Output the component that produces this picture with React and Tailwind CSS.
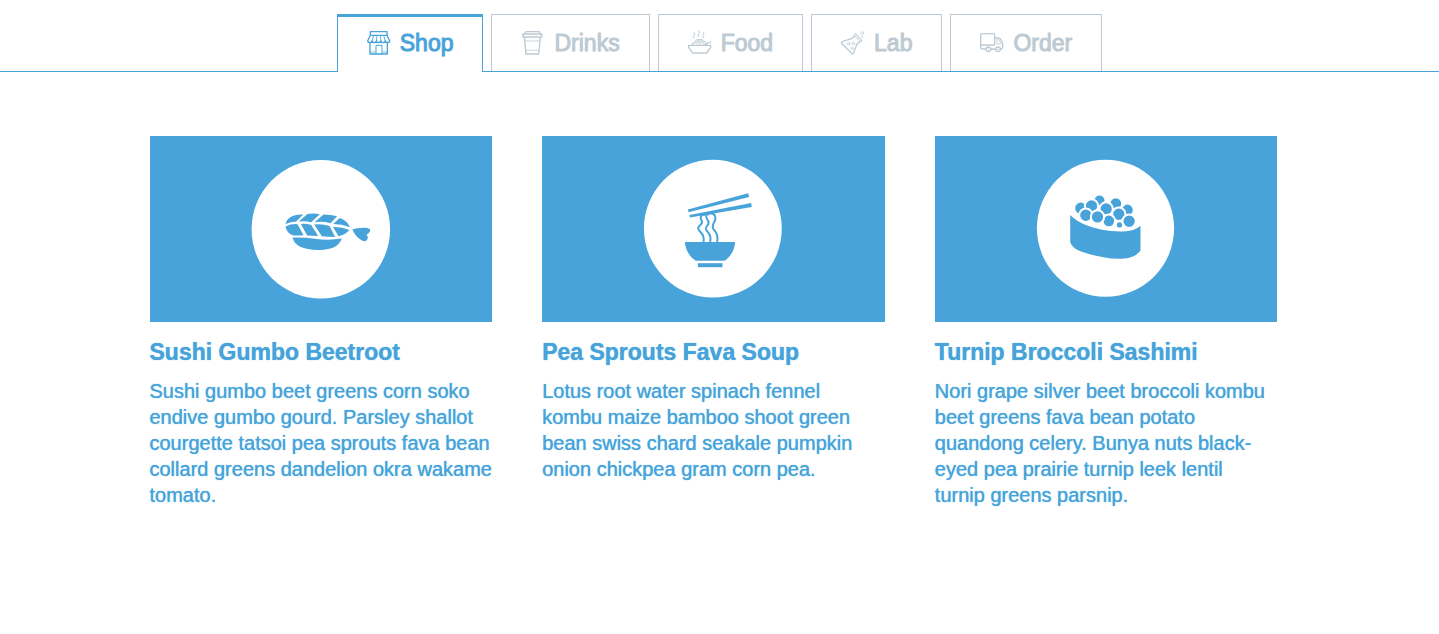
import { useState } from "react";
import clsx from "clsx";

function LineIcon({ children }) {
  return (
    <svg
      viewBox="0 0 72 78"
      className="h-[26px] w-6 shrink-0"
      fill="none"
      stroke="currentColor"
      strokeWidth="4"
      strokeLinecap="round"
      strokeLinejoin="round"
      aria-hidden="true"
    >
      {children}
    </svg>
  );
}

function ShopIcon() {
  return (
    <LineIcon>
      <path d="M10 16V5h50v11" />
      <path d="M10 16h50l8 17a6.7 6 0 0 1-13.2 0a6.7 6 0 0 1-13.2 0a6.7 6 0 0 1-13.2 0a6.7 6 0 0 1-13.2 0a6.7 6 0 0 1-13.2 0z" />
      <path d="M20 17l-5 16M30 17l-2 16M40 17l2 16M50 17l5 16" strokeWidth="2.6" />
      <path d="M9 40v32h52V40" />
      <path d="M27 72V46h18v26" strokeWidth="3" />
      <path d="M10 66h14M48 66h12" strokeWidth="2" />
    </LineIcon>
  );
}

function CupIcon() {
  return (
    <LineIcon>
      <path d="M11 12l4-7h39l4 7" />
      <rect x="5" y="12" width="58" height="9" rx="2" />
      <path d="M10 22l5 50h38l5-50" />
      <path d="M12 33h44M14 61h40" strokeWidth="2.4" />
    </LineIcon>
  );
}

function BowlIcon() {
  return (
    <LineIcon>
      <path d="M2 46h66v6l-12 17H14L2 52z" />
      <path d="M13 44q1-7 7-9 4-7 15-7t15 7q6 2 7 9" strokeWidth="3" />
      <path
        d="M18 43q3-10 16-12M25 43q3-8 14-11M33 43q3-6 12-8M22 36q12-1 17 7M30 32q13 1 18 11M40 31q8 3 9 11"
        strokeWidth="2"
      />
      <path d="M51 43l17-7" />
      <path d="M18 24q-4-4 0-8t1-8M32 20q-4-4 0-8t1-10M46 24q-4-4 0-8t1-8" strokeWidth="3" />
    </LineIcon>
  );
}

function FlaskIcon() {
  return (
    <LineIcon>
      <rect x="36" y="20" width="30" height="6" rx="3" transform="rotate(46 51 23)" strokeWidth="3" />
      <path d="M40 18l-7 7L4 35q-4 2-1 6l29 29q4 3 6-1l10-27 8-7" />
      <circle cx="23" cy="41" r="4" strokeWidth="2.4" />
      <circle cx="37" cy="41" r="4" strokeWidth="2.4" />
      <circle cx="33" cy="55" r="3" strokeWidth="2.4" />
      <circle cx="64" cy="9" r="4" strokeWidth="2.4" />
      <circle cx="63" cy="21" r="1" strokeWidth="2" />
    </LineIcon>
  );
}

function TruckIcon() {
  return (
    <LineIcon>
      <path d="M16 57H8q-6 0-6-6V15q0-4 4-4h34q4 0 4 4v30H3" />
      <path d="M45 24h11q4 0 6 4l6 12v12q0 5-5 5" />
      <path d="M52 29h5l6 13H52z" strokeWidth="2.4" />
      <path d="M34 57h11" />
      <circle cx="25" cy="58" r="7" />
      <circle cx="54" cy="58" r="7" />
      <circle cx="25" cy="58" r="1" strokeWidth="2" />
      <circle cx="54" cy="58" r="1" strokeWidth="2" />
    </LineIcon>
  );
}

function SushiArt() {
  return (
    <svg viewBox="0 0 343 186" className="block w-full bg-[#47a3da]" role="img" aria-label="Shrimp sushi">
      <g transform="translate(95 14) scale(.33333)" fill="#47a3da">
        <circle cx="228" cy="238" r="208" fill="#fff" />
        <path d="M122 222C126 204 146 192 175 194L154 215Q138 216 122 222Z" />
        <path d="M188 192Q208 189 225 193L199 217Q181 212 162 215Z" />
        <path d="M236 194Q258 195 277 199L257 220Q232 213 209 217Z" />
        <path d="M285 204Q307 212 316 232Q291 222 265 222Z" />
        <path d="M122 230Q140 221 158 223L176 256Q158 258 142 256Q125 248 122 230Z" />
        <path d="M168 222Q184 220 199 225L220 258Q202 258 187 257Z" />
        <path d="M208 224Q230 220 254 228L271 261Q249 261 231 259Z" />
        <path d="M265 231Q291 230 314 240Q302 254 281 259Z" />
        <path d="M143 263Q180 262 215 267T291 266C284 288 262 300 224 300C177 301 148 288 143 263Z" />
        <path d="M323 239C338 233 365 231 375 237C379 244 372 251 365 254C372 262 369 272 361 274C347 275 329 255 323 239Z" />
      </g>
    </svg>
  );
}

function SoupArt() {
  return (
    <svg viewBox="0 0 343 186" className="block w-full bg-[#47a3da]" role="img" aria-label="Noodle soup">
      <g transform="translate(96 14) scale(.33333)" fill="#47a3da">
        <circle cx="225" cy="236" r="207" fill="#fff" />
        <path d="M150 179L331 130L334 141L152 187Z" />
        <path d="M155 195L340 159L342 171L156 203Z" />
        <g fill="none" stroke="#47a3da" strokeWidth="6">
          <path d="M202 195C186 191 187 207 191 211C199 223 179 227 181 236C183 248 202 248 197 276" />
          <path d="M216 192C201 191 204 204 210 211C219 223 203 227 204 237C207 249 223 250 217 276" />
          <path d="M217 190C231 190 235 200 232 211C227 222 220 228 227 238C234 248 242 253 238 276" />
        </g>
        <path d="M141 276H292C290 301 278 321 260 333H174C154 319 143 301 141 276Z" />
        <path d="M180 340H254V352H180Z" />
      </g>
    </svg>
  );
}

const roe = [
  [209, 152, 15],
  [258, 161, 16],
  [153, 175, 17],
  [185, 168, 17],
  [293, 180, 16],
  [168, 196, 17],
  [229, 177, 17],
  [267, 193, 17],
  [269, 225, 8],
  [237, 213, 16],
  [203, 201, 17],
  [298, 214, 17],
];

function RollArt() {
  return (
    <svg viewBox="0 0 343 186" className="block w-full bg-[#47a3da]" role="img" aria-label="Roe sushi roll">
      <g transform="translate(95 14) scale(.33333)" fill="#47a3da">
        <circle cx="227" cy="235" r="206" fill="#fff" />
        {roe.map(([cx, cy, r]) => (
          <circle key={`${cx}-${cy}`} cx={cx} cy={cy} r={r + 3} stroke="#fff" strokeWidth="6" />
        ))}
        <path d="M121 194C145 223 203 243 270 245C298 245 319 240 332 226V302C319 320 297 327 267 327C221 326 177 314 143 300C130 293 123 284 121 276Z" />
        <path d="M118 188C149 218 204 237 270 240C300 240 320 235 334 222" fill="none" stroke="#fff" strokeWidth="7" />
      </g>
    </svg>
  );
}

const tabs = [
  { name: "Shop", Icon: ShopIcon },
  { name: "Drinks", Icon: CupIcon },
  { name: "Food", Icon: BowlIcon },
  { name: "Lab", Icon: FlaskIcon },
  { name: "Order", Icon: TruckIcon },
];

const dishes = [
  {
    title: "Sushi Gumbo Beetroot",
    text: "Sushi gumbo beet greens corn soko endive gumbo gourd. Parsley shallot courgette tatsoi pea sprouts fava bean collard greens dandelion okra wakame tomato.",
    Art: SushiArt,
  },
  {
    title: "Pea Sprouts Fava Soup",
    text: "Lotus root water spinach fennel kombu maize bamboo shoot green bean swiss chard seakale pumpkin onion chickpea gram corn pea.",
    Art: SoupArt,
  },
  {
    title: "Turnip Broccoli Sashimi",
    text: "Nori grape silver beet broccoli kombu beet greens fava bean potato quandong celery. Bunya nuts black-eyed pea prairie turnip leek lentil turnip greens parsnip.",
    Art: RollArt,
  },
];

export default function App() {
  const [active, setActive] = useState("Shop");
  return (
    <div className="min-h-screen bg-white font-['Liberation_Sans',Arial,sans-serif] text-[#47a3da]">
      <nav className="border-b border-[#47a3da] pt-3.5">
        <ul className="flex justify-center gap-2">
          {tabs.map(({ name, Icon }) => (
            <li key={name} className="flex">
              <a
                href={`#${name.toLowerCase()}`}
                onClick={() => setActive(name)}
                aria-current={active === name ? "page" : undefined}
                className={clsx(
                  "flex items-center gap-[9px] border-x px-[29px] text-[23px] [-webkit-text-stroke:1px]",
                  active === name
                    ? "relative -mb-px h-[58px] border-t-3 border-[#47a3da] bg-white pb-[3px] text-[#47a3da]"
                    : "h-[57px] border-t border-[#bdcad3] text-[#bdcad3]"
                )}
              >
                <Icon />
                {name}
              </a>
            </li>
          ))}
        </ul>
      </nav>
      <main className="mx-auto grid max-w-[1200px] grid-cols-3 gap-[50px] pt-16 pr-[42px] pl-[30px]">
        {dishes.map(({ title, text, Art }) => (
          <article key={title}>
            <Art />
            <h2 className="mt-4 text-[23px] leading-7 font-bold [text-shadow:0_0_1px_#47a3da]">{title}</h2>
            <p className="mt-3 text-xl leading-[26px] [text-shadow:0_0_1px_#47a3da]">{text}</p>
          </article>
        ))}
      </main>
    </div>
  );
}
